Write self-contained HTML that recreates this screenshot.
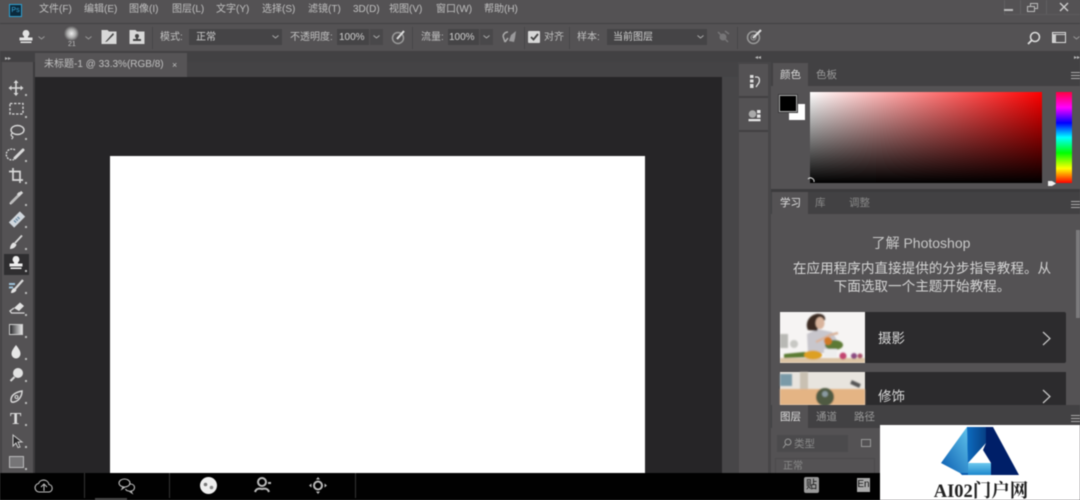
<!DOCTYPE html>
<html><head><meta charset="utf-8"><style>
*{box-sizing:border-box}
html,body{margin:0;padding:0;width:1080px;height:500px;overflow:hidden;background:#535153}
body{font-family:"Liberation Sans","Noto Sans CJK SC",sans-serif;color:#c8c8c8}
.a{position:absolute}
.t{position:absolute;white-space:nowrap;font-size:10px;line-height:14px;color:#c0c0c0}
#w{position:absolute;left:0;top:0;width:1080px;height:500px;filter:blur(.6px);overflow:hidden}
svg{position:absolute;overflow:visible}
</style></head><body>
<div id="w">
<div class="a" style="left:0;top:0;width:1080px;height:23px;background:#545254"></div>
<div class="a" style="left:0;top:23px;width:1080px;height:1px;background:#424143"></div>
<div class="a" style="left:0;top:24px;width:1080px;height:27px;background:#545254"></div>
<div class="a" style="left:0;top:51px;width:1080px;height:11px;background:#424143"></div>
<div class="a" style="left:35px;top:62px;width:703px;height:15px;background:#444345"></div>

<!-- PS logo -->
<div class="a" style="left:9px;top:4px;width:13px;height:13px;background:#0c2a3c;border:1px solid #2f9fd0;color:#39a9dc;font-size:7px;line-height:11px;text-align:center">Ps</div>
<!-- menu -->
<span class="t" style="left:39px;top:3px">文件(F)</span>
<span class="t" style="left:84px;top:3px">编辑(E)</span>
<span class="t" style="left:129px;top:3px">图像(I)</span>
<span class="t" style="left:172px;top:3px">图层(L)</span>
<span class="t" style="left:216px;top:3px">文字(Y)</span>
<span class="t" style="left:262px;top:3px">选择(S)</span>
<span class="t" style="left:308px;top:3px">滤镜(T)</span>
<span class="t" style="left:353px;top:3px">3D(D)</span>
<span class="t" style="left:389px;top:3px">视图(V)</span>
<span class="t" style="left:436px;top:3px">窗口(W)</span>
<span class="t" style="left:484px;top:3px">帮助(H)</span>
<!-- window controls -->
<div class="a" style="left:1004px;top:0;width:1px;height:15px;background:#616062"></div>
<div class="a" style="left:1020px;top:0;width:1px;height:15px;background:#616062"></div>
<div class="a" style="left:1046px;top:0;width:1px;height:15px;background:#616062"></div>
<div class="a" style="left:1004px;top:14px;width:76px;height:1px;background:#5c5b5d"></div>
<div class="a" style="left:1004px;top:9px;width:9px;height:2px;background:#bbb"></div>
<svg style="left:1027px;top:3px" width="12" height="10"><path d="M3.500 3V.5h7v5H8M.5 3.500h7v5h-7z" fill="none" stroke="#bbb"/></svg>
<svg style="left:1059px;top:2px" width="11" height="11"><path d="M1 1l8 8M9 1l-8 8" stroke="#ccc" stroke-width="1.400"/></svg>

<!-- options bar -->
<svg style="left:17px;top:29px" width="18" height="16"><path d="M9 1a3.500 3.500 0 0 1 2 6.300V8.500h4.500v3h-13v-3H7V7.300A3.500 3.500 0 0 1 9 1zM3.500 12.500h11V14h-11z" fill="#e2e2e2"/></svg>
<svg style="left:38px;top:36px" width="7" height="4"><path d="M.5.5l3 2.500 3-2.500" fill="none" stroke="#999"/></svg>
<div class="a" style="left:64px;top:26px;width:15px;height:15px;border-radius:50%;background:radial-gradient(circle,#eee 0,#aaa 40%,#545254 72%)"></div>
<span class="t" style="left:68px;top:40px;font-size:7px;line-height:9px">21</span>
<svg style="left:85px;top:36px" width="7" height="4"><path d="M.5.500l3 2.500 3-2.500" fill="none" stroke="#999"/></svg>
<svg style="left:101px;top:29px" width="16" height="16"><path d="M.5 1h6l1.500 1.500h7.500V15H.5z" fill="#d8d8d8"/><path d="M12 4L5 12l-1 1 2-.500 7-7z" fill="#444"/></svg>
<svg style="left:129px;top:29px" width="16" height="16"><path d="M.5 1h6l1.500 1.500h7.500V15H.5z" fill="#d8d8d8"/><circle cx="8" cy="7" r="2" fill="#444"/><path d="M7 8h2v2h3v2H4v-2h3z" fill="#444"/></svg>
<div class="a" style="left:152px;top:27px;width:1px;height:22px;background:#474648"></div>
<span class="t" style="left:160px;top:31px">模式:</span>
<div class="a" style="left:189px;top:29px;width:93px;height:16px;background:#454446"></div>
<span class="t" style="left:196px;top:31px;color:#d0d0d0">正常</span>
<svg style="left:272px;top:35px" width="7" height="4"><path d="M.5.500l3 2.500 3-2.500" fill="none" stroke="#aaa"/></svg>
<span class="t" style="left:290px;top:31px">不透明度:</span>
<div class="a" style="left:337px;top:29px;width:32px;height:16px;background:#454446"></div>
<span class="t" style="left:339px;top:31px;color:#d0d0d0">100%</span>
<div class="a" style="left:370px;top:29px;width:13px;height:16px;background:#49484a"></div>
<svg style="left:373px;top:35px" width="7" height="4"><path d="M.5.500l3 2.500 3-2.500" fill="none" stroke="#aaa"/></svg>
<svg style="left:391px;top:29px" width="15" height="16"><circle cx="7" cy="9" r="5.500" fill="none" stroke="#999" stroke-width="1.500"/><path d="M6 10l7-8" stroke="#ddd" stroke-width="2"/></svg>
<div class="a" style="left:412px;top:27px;width:1px;height:22px;background:#474648"></div>
<span class="t" style="left:421px;top:31px">流量:</span>
<div class="a" style="left:448px;top:29px;width:31px;height:16px;background:#454446"></div>
<span class="t" style="left:449px;top:31px;color:#d0d0d0">100%</span>
<div class="a" style="left:480px;top:29px;width:13px;height:16px;background:#49484a"></div>
<svg style="left:483px;top:35px" width="7" height="4"><path d="M.5.500l3 2.500 3-2.500" fill="none" stroke="#aaa"/></svg>
<svg style="left:502px;top:30px" width="16" height="14"><path d="M1 6c1-3 3-4 5-4M1 6l2 6M3 12l3-4" fill="none" stroke="#aaa" stroke-width="1.500"/><path d="M7 11l2-6 5-4-1 7-1 4z" fill="#9a999b"/></svg>
<div class="a" style="left:524px;top:27px;width:1px;height:22px;background:#474648"></div>
<div class="a" style="left:528px;top:31px;width:12px;height:12px;background:#d8d8d8;border-radius:1px"></div>
<svg style="left:530px;top:33px" width="9" height="8"><path d="M1 4l2.500 2.500L8 1" fill="none" stroke="#444" stroke-width="1.800"/></svg>
<span class="t" style="left:544px;top:31px">对齐</span>
<div class="a" style="left:569px;top:27px;width:1px;height:22px;background:#474648"></div>
<span class="t" style="left:577px;top:31px">样本:</span>
<div class="a" style="left:607px;top:29px;width:100px;height:16px;background:#454446"></div>
<span class="t" style="left:613px;top:31px;color:#d0d0d0">当前图层</span>
<svg style="left:697px;top:35px" width="7" height="4"><path d="M.5.500l3 2.500 3-2.500" fill="none" stroke="#aaa"/></svg>
<svg style="left:716px;top:30px" width="14" height="14"><circle cx="7" cy="7" r="3.500" fill="#767577"/><path d="M2 2l10 10M9 1l4 3" stroke="#767577" stroke-width="1.500"/></svg>
<div class="a" style="left:737px;top:27px;width:1px;height:22px;background:#474648"></div>
<svg style="left:746px;top:29px" width="16" height="16"><circle cx="7.500" cy="8.500" r="6" fill="none" stroke="#999" stroke-width="1.500"/><circle cx="7.500" cy="8.500" r="2.500" fill="none" stroke="#999"/><path d="M7 9l8-8" stroke="#ddd" stroke-width="2"/></svg>
<svg style="left:1027px;top:31px" width="14" height="14"><circle cx="8" cy="6" r="4.500" fill="none" stroke="#ddd" stroke-width="1.500"/><path d="M4.500 9.500L1 13" stroke="#ddd" stroke-width="1.800"/></svg>
<svg style="left:1052px;top:32px" width="15" height="12"><path d="M.5.500h13v10H.5z" fill="none" stroke="#ddd"/><path d="M1 2h12v1H1zM1 3h3v7H1z" fill="#ccc"/></svg>
<svg style="left:1073px;top:36px" width="7" height="4"><path d="M.5.500l3 2.500 3-2.500" fill="none" stroke="#999"/></svg>

<!-- tabs -->
<div class="a" style="left:35px;top:53px;width:152px;height:24px;background:#565456"></div>
<span class="t" style="left:44px;top:58px">未标题-1 @ 33.3%(RGB/8)</span>
<span class="t" style="left:172px;top:58px;font-size:9px">×</span>
<div class="a" style="left:5px;top:56px;font-size:6px;line-height:6px;color:#bbb">▸▸</div>
<div class="a" style="left:755px;top:55px;font-size:6px;line-height:6px;color:#bbb">◂◂</div>
<div class="a" style="left:1074px;top:55px;font-size:6px;line-height:6px;color:#bbb">▸▸</div>

<!-- canvas -->
<div class="a" style="left:35px;top:77px;width:687px;height:396px;background:#262527"></div>
<div class="a" style="left:722px;top:77px;width:16px;height:396px;background:#474648"></div>
<div class="a" style="left:110px;top:156px;width:535px;height:317px;background:#fff"></div>

<!-- toolbar -->
<div class="a" style="left:0;top:62px;width:33px;height:411px;background:#545254"></div>
<div class="a" style="left:33px;top:62px;width:2px;height:411px;background:#3c3b3d"></div>
<div class="a" style="left:0;top:62px;width:2px;height:411px;background:#454446"></div>
<div class="a" style="left:4px;top:254px;width:25px;height:21px;background:#2f2e30"></div>
<svg style="left:0;top:0" width="33" height="473" fill="none" stroke="#d8d8d8">
<!-- move -->
<path d="M16 82v12M10 88h12" stroke-width="1.600"/>
<path d="M16 80l-2.500 3h5zM16 96l-2.500-3h5zM8.500 88l3-2.500v5zM23.500 88l-3-2.500v5z" fill="#d8d8d8" stroke="none"/>
<!-- marquee -->
<rect x="10" y="103.500" width="13" height="10.500" stroke-dasharray="2.500 1.500" stroke-width="1.300"/>
<!-- lasso -->
<ellipse cx="17.500" cy="130" rx="6.500" ry="4.500" stroke-width="1.400"/><path d="M12.500 133c-2 1-1.500 3 0 3.500 1 .5 0 2-1 2.500" stroke-width="1.200"/>
<!-- quick select -->
<path d="M15 150a5.500 5.500 0 1 0-1 9.500" stroke-dasharray="2 1" stroke-width="1.300"/>
<path d="M15 158l8-8" stroke-width="3" stroke-linecap="round"/>
<!-- crop -->
<path d="M13 168v12h10M9 171.500h11V183" stroke-width="1.700"/>
<!-- eyedropper -->
<path d="M11 203l8-8" stroke-width="2.800" stroke="#bbb"/><path d="M11 203l-1 1" stroke-width="2"/><path d="M18 193l2.500 2.500M20 192l2 2" stroke-width="3.200"/>
<!-- heal -->
<path d="M11.500 225l11-11" stroke-width="7.500" stroke="#d0d6dc"/><path d="M14.500 222l5-5" stroke-width="3" stroke="#6f8fa8" stroke-dasharray="1.500 1"/>
<!-- brush -->
<path d="M15 243l7-7.500" stroke-width="1.800"/><path d="M10 249c0-3 1.500-6 4-6.500l2.500 2c-.5 2.500-3.500 4.500-6.500 4.500z" fill="#e2e2e2" stroke="none"/>
<!-- history -->
<path d="M15 289l8-9" stroke-width="2.200"/><path d="M11 293c0-2 1-4 3-5l2.500 2c-1 2-3 3-5.500 3z" fill="#e2e2e2" stroke="none"/><path d="M9 284h6M9 287.500h4" stroke="#9cc0d8" stroke-width="2"/>
<!-- eraser -->
<path d="M14 308l6-5.500 4 3.500-5 5z" fill="#e2e2e2" stroke="none"/><path d="M14 308l-4 3 1.500 2h8M11.500 313h13" stroke-width="1.300"/>
<!-- drop -->
<path d="M16 345c3 4 4.500 6 4.500 9a4.500 4.500 0 0 1-9 0c0-3 1.500-5 4.500-9z" fill="#e6e6e6" stroke="none"/>
<!-- dodge -->
<circle cx="18" cy="373" r="5" fill="#e2e2e2" stroke="none"/><path d="M14.500 377l-4 4" stroke-width="2"/>
<!-- pen -->
<path d="M11 400c0-5 5-8 11-9 0 5-3 10-8 11-2 .5-3 0-3-2z" stroke-width="1.500"/><circle cx="16.500" cy="397" r="1.500" stroke-width="1"/>
</svg>
<svg style="left:7px;top:255px" width="18" height="18"><path d="M9 1a3.500 3.500 0 0 1 2 6.300V8.500h4.500v3h-13v-3H7V7.300A3.500 3.500 0 0 1 9 1zM3.500 12.500h11V14h-11z" fill="#eee"/></svg>
<span class="a" style="left:10px;top:410px;font-family:'Liberation Serif',serif;font-size:17px;line-height:18px;font-weight:bold;color:#dcdcdc">T</span>
<svg style="left:12px;top:434px" width="12" height="14"><path d="M1 1l9 7H6l2 5-2 .500L4 9l-3 3z" fill="#2e2d2f" stroke="#ccc"/></svg>
<div class="a" style="left:9px;top:456px;width:15px;height:12px;background:#767577;border:1px solid #bbb"></div>
<div class="a" style="left:9px;top:324px;width:14px;height:11px;background:linear-gradient(90deg,#2a2a2c,#e6e6e6);border:1px solid #ccc"></div>
<!-- corner dots -->
<svg style="left:25px;top:91px" width="5" height="380" fill="#bbb"><rect y="3" width="2" height="2"/><rect y="25" width="2" height="2"/><rect y="47" width="2" height="2"/><rect y="69" width="2" height="2"/><rect y="91" width="2" height="2"/><rect y="113" width="2" height="2"/><rect y="135" width="2" height="2"/><rect y="157" width="2" height="2"/><rect y="179" width="2" height="2"/><rect y="201" width="2" height="2"/><rect y="223" width="2" height="2"/><rect y="245" width="2" height="2"/><rect y="267" width="2" height="2"/><rect y="289" width="2" height="2"/><rect y="311" width="2" height="2"/><rect y="333" width="2" height="2"/><rect y="355" width="2" height="2"/><rect y="377" width="2" height="2"/></svg>

<!-- icon strip -->
<div class="a" style="left:738px;top:62px;width:33px;height:411px;background:#474648"></div>
<div class="a" style="left:739px;top:64px;width:29px;height:409px;background:#545254"></div>
<div class="a" style="left:739px;top:96px;width:29px;height:2px;background:#424143"></div>
<div class="a" style="left:739px;top:130px;width:29px;height:2px;background:#424143"></div>
<svg style="left:749px;top:75px" width="12" height="15"><path d="M1 0h3.500v3H1zM1 4.500h3.500v3H1zM1 9h3.500v4H1z" fill="#ddd"/><path d="M6 2h2c3 0 3 5 1 7l-2 3" fill="none" stroke="#ddd" stroke-width="1.300"/></svg>
<svg style="left:748px;top:109px" width="13" height="14"><circle cx="4.500" cy="5" r="3.800" fill="#aaa"/><path d="M9 1h3.500v3.200H9zM9 5.500h3.500v3.200H9zM.5 10h12v2.300H.5z" fill="#e6e6e6"/></svg>

<!-- color panel -->
<div class="a" style="left:771px;top:62px;width:309px;height:127px;background:#545254"></div>
<div class="a" style="left:771px;top:62px;width:309px;height:24px;background:#424143"></div>
<div class="a" style="left:773px;top:63px;width:35px;height:23px;background:#545254"></div>
<span class="t" style="left:780px;top:67px;color:#e0e0e0;top:67px"></span>
<span class="t" style="left:780px;top:68px;color:#d8d8d8;font-size:10.500px">颜色</span>
<span class="t" style="left:816px;top:68px;color:#999;font-size:10.500px">色板</span>
<div class="a" style="left:1071px;top:72px;width:9px;height:1px;background:#aaa;box-shadow:0 3px 0 #aaa,0 6px 0 #aaa"></div>
<div class="a" style="left:789px;top:104px;width:16px;height:16px;background:#fff"></div>
<div class="a" style="left:779px;top:95px;width:18px;height:17px;background:#000;border:1px solid #aaa;outline:1px solid #3c3b3d"></div>
<div class="a" style="left:810px;top:92px;width:232px;height:91px;background:linear-gradient(to bottom,rgba(0,0,0,0),#000),linear-gradient(to right,#fff,#ff0000)"></div>
<div class="a" style="left:1056px;top:92px;width:16px;height:91px;background:linear-gradient(to bottom,#ff0040,#ff00ff 17%,#0000ff 34%,#00ffff 50%,#00ff00 67%,#ffff00 84%,#ff0000)"></div>
<svg style="left:808px;top:178px" width="8" height="8"><path d="M0 1a3.500 3.500 0 0 1 6 3" fill="none" stroke="#ddd"/></svg>
<svg style="left:1048px;top:180px" width="8" height="7"><path d="M0 1h4l4 2.500L4 6H0z" fill="#eee"/></svg>

<!-- learn panel -->
<div class="a" style="left:771px;top:189px;width:309px;height:3px;background:#3c3b3d"></div>
<div class="a" style="left:771px;top:192px;width:309px;height:22px;background:#424143"></div>
<div class="a" style="left:772px;top:192px;width:36px;height:22px;background:#545254"></div>
<span class="t" style="left:780px;top:196px;color:#e0e0e0;font-size:10.500px">学习</span>
<span class="t" style="left:815px;top:196px;color:#888;font-size:10.500px">库</span>
<span class="t" style="left:849px;top:196px;color:#888;font-size:10.500px">调整</span>
<div class="a" style="left:1071px;top:201px;width:9px;height:1px;background:#aaa;box-shadow:0 3px 0 #aaa,0 6px 0 #aaa"></div>
<div class="a" style="left:771px;top:214px;width:309px;height:191px;background:#545254"></div>
<div class="a" style="left:1076px;top:230px;width:4px;height:88px;background:#7b7a7c"></div>
<div class="t" style="left:771px;top:234px;width:300px;text-align:center;font-size:14px;line-height:18px;color:#c8c8c8">了解 Photoshop</div>
<div class="t" style="left:772px;top:260px;width:300px;text-align:center;font-size:13.600px;line-height:18px;color:#d4d4d4">在应用程序内直接提供的分步指导教程。从<br>下面选取一个主题开始教程。</div>
<!-- cards -->
<div class="a" style="left:780px;top:312px;width:286px;height:51px;background:#2c2b2d;border-radius:2px"></div>
<div class="a" style="left:780px;top:372px;width:286px;height:33px;background:#2c2b2d"></div>
<svg style="left:780px;top:312px" width="85" height="51" viewBox="0 0 85 51">
<defs><clipPath id="c1"><rect width="85" height="51"/></clipPath><filter id="b"><feGaussianBlur stdDeviation="0.900"/></filter></defs>
<g clip-path="url(#c1)"><rect width="85" height="51" fill="#f6f4f3"/>
<g filter="url(#b)">
<rect y="46" width="85" height="5" fill="#dcc4a4"/>
<path d="M27 22l10-5 15 3 5 8-6 8-4 5H28z" fill="#c8c6cc"/>
<path d="M28 18c-3-6 0-14 8-16 6-1 10 2 9 6l-5 3-3 8z" fill="#3a2a20"/>
<ellipse cx="40" cy="11" rx="4.500" ry="6" fill="#d9b49c"/>
<path d="M36 30l14-7 8-2" stroke="#d9b49c" stroke-width="2.500" fill="none"/>
<path d="M4 42l20-2 12 2-2 3-30 1z" fill="#5a7a30"/>
<ellipse cx="33" cy="43" rx="9" ry="4.500" fill="#dda020"/>
<ellipse cx="54" cy="33" rx="9" ry="5" fill="#5d7a34"/>
<circle cx="48" cy="29" r="4" fill="#d07a28"/>
<rect x="44" y="37" width="13" height="8" fill="#eee"/>
<circle cx="63" cy="44" r="3.500" fill="#c24470"/><circle cx="74" cy="44" r="3" fill="#8a4a80"/><circle cx="80" cy="44" r="2.500" fill="#a8506a"/>
<path d="M0 22h8v14H0z" fill="#b8b8b4"/><circle cx="14" cy="32" r="4" fill="#c8c8c4"/>
</g></g>
</svg>
<svg style="left:780px;top:372px" width="85" height="33" viewBox="0 0 85 33">
<rect width="85" height="33" fill="#e8e4de"/>
<g filter="url(#b)">
<rect y="17" width="85" height="16" fill="#e4b484"/>
<rect x="0" y="2" width="12" height="12" fill="#7a9aa8"/>
<rect x="20" y="0" width="8" height="17" fill="#c9c0b2"/>
<path d="M71 10l9 4" stroke="#555" stroke-width="4"/>
<circle cx="45" cy="25" r="9" fill="#4f5a42"/><circle cx="45" cy="22" r="3" fill="#8a9aa0"/>
</g>
</svg>
<span class="t" style="left:878px;top:330px;font-size:13.500px;line-height:18px;color:#d8d8d8">摄影</span>
<span class="t" style="left:878px;top:388px;font-size:13.500px;line-height:18px;color:#d8d8d8">修饰</span>
<svg style="left:1042px;top:331px" width="10" height="15"><path d="M1 1l7 6.500L1 14" fill="none" stroke="#c8c8c8" stroke-width="1.200"/></svg>
<svg style="left:1042px;top:389px" width="10" height="15"><path d="M1 1l7 6.500L1 14" fill="none" stroke="#c8c8c8" stroke-width="1.200"/></svg>

<!-- layers panel -->
<div class="a" style="left:771px;top:405px;width:309px;height:68px;background:#545254"></div>
<div class="a" style="left:771px;top:405px;width:309px;height:23px;background:#424143"></div>
<div class="a" style="left:772px;top:405px;width:36px;height:23px;background:#545254"></div>
<span class="t" style="left:780px;top:410px;color:#e0e0e0;font-size:10.500px">图层</span>
<span class="t" style="left:816px;top:410px;color:#999;font-size:10.500px">通道</span>
<span class="t" style="left:854px;top:410px;color:#999;font-size:10.500px">路径</span>
<div class="a" style="left:1071px;top:415px;width:9px;height:1px;background:#aaa;box-shadow:0 3px 0 #aaa,0 6px 0 #aaa"></div>
<div class="a" style="left:777px;top:435px;width:71px;height:17px;background:#4b4a4c"></div>
<svg style="left:782px;top:438px" width="10" height="11"><circle cx="6" cy="4" r="3" fill="none" stroke="#999"/><path d="M4 6L1 10" stroke="#999"/></svg>
<span class="t" style="left:794px;top:437px;color:#8a8a8a;font-size:10.500px">类型</span>
<div class="a" style="left:861px;top:439px;width:10px;height:8px;border:1px solid #999"></div>
<div class="a" style="left:775px;top:458px;width:100px;height:15px;border:1px solid #4b4a4c;border-bottom:0"></div>
<span class="t" style="left:783px;top:460px;color:#8a8a8a">正常</span>

<!-- taskbar -->
<div class="a" style="left:0;top:473px;width:1080px;height:27px;background:#010101"></div>
<div class="a" style="left:84px;top:473px;width:1px;height:25px;background:#333"></div>
<div class="a" style="left:169px;top:473px;width:1px;height:25px;background:#333"></div>
<div class="a" style="left:355px;top:473px;width:1px;height:25px;background:#333"></div>
<div class="a" style="left:95px;top:498px;width:32px;height:2px;background:#444"></div>
<svg style="left:34px;top:478px" width="20" height="16" fill="none" stroke="#bbb" stroke-width="1.100"><path d="M5 14a4.300 4.300 0 0 1-.5-8.500 5.500 5.500 0 0 1 10.500 1 3.800 3.800 0 0 1 0 7.500zM10 13V6.500M7 9l3-3 3 3"/></svg>
<svg style="left:118px;top:478px" width="18" height="16" fill="none" stroke="#bbb" stroke-width="1.100"><ellipse cx="6.500" cy="5" rx="5.500" ry="4"/><path d="M5 9l-1 2 3-2M11 6h1c3 0 4.500 1.500 4.500 3.500S15 13 13 13l1 2-3-2c-2 0-3-1-3.500-2"/></svg>
<svg style="left:199px;top:476px" width="19" height="19"><circle cx="9.500" cy="9.500" r="8.500" fill="#eee"/><circle cx="6.500" cy="8.500" r="1.800" fill="#777"/><circle cx="12.500" cy="11.500" r="1.800" fill="#888"/></svg>
<svg style="left:254px;top:476px" width="18" height="18" fill="none" stroke="#bbb" stroke-width="2"><circle cx="8" cy="6" r="4"/><path d="M1 16c1-3 3-4 7-3 4-1 6 0 7 3M14 7h3"/></svg>
<svg style="left:309px;top:477px" width="18" height="17"><circle cx="9" cy="8.500" r="4" fill="none" stroke="#bbb" stroke-width="2"/><path d="M9 0l2 2.500H7zM9 17l-2-2.500h4zM0 8.500L2.500 6.500v4zM18 8.500l-2.500-2v4z" fill="#bbb"/></svg>
<div class="a" style="left:804px;top:477px;width:15px;height:16px;background:#999;border-radius:2px;color:#111;font-size:11px;line-height:16px;text-align:center">贴</div>
<div class="a" style="left:857px;top:478px;width:13px;height:14px;background:#aaa;color:#111;font-size:10px;line-height:14px;text-align:center">En</div>

<!-- logo -->
<div class="a" style="left:880px;top:425px;width:200px;height:75px;background:#fff"></div>
<svg style="left:880px;top:425px" width="200" height="75" viewBox="0 0 200 75">
<defs>
<linearGradient id="l1" x1="1" y1="0" x2="0" y2="1"><stop offset="0" stop-color="#60c4ec"/><stop offset="1" stop-color="#0a5cb0"/></linearGradient>
<linearGradient id="l2" x1="0" y1="0" x2="1" y2="0"><stop offset="0" stop-color="#0d6cc0"/><stop offset=".6" stop-color="#08488f"/><stop offset="1" stop-color="#03246e"/></linearGradient>
<linearGradient id="l3" x1="0" y1="0" x2="0" y2="1"><stop offset="0" stop-color="#6cc8ee"/><stop offset="1" stop-color="#1c86cc"/></linearGradient>
</defs>
<path d="M87 2L61 38l19 10h8V38z" fill="url(#l1)"/>
<path d="M87 2h26v46H88z" fill="url(#l2)"/>
<path d="M113 2l26 48h-28V38l-8-13 3-7V2z" fill="#001f68"/>
<path d="M88 38l18-20-3 7 8 13z" fill="#fff"/>
<path d="M88 38h23v12H88z" fill="url(#l3)"/>
<path d="M80 48h8v2h-6z" fill="#0a5cb0"/>
</svg>
<div class="a" style="left:931px;top:481px;width:100px;text-align:center;font-family:'Liberation Serif','Noto Serif CJK SC',serif;font-weight:bold;font-size:18.500px;line-height:22px;color:#222;white-space:nowrap">AI02门户网</div>
</div>
</body></html>
